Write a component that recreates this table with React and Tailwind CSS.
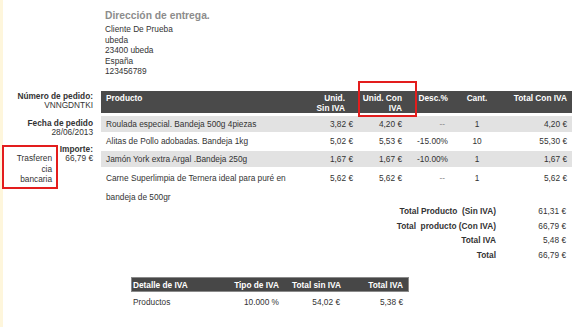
import React from "react";

const rows = [
  { name: "Roulada especial. Bandeja 500g 4piezas", sin: "3,82 €", con: "4,20 €", desc: "--", cant: "1", total: "4,20 €" },
  { name: "Alitas de Pollo adobadas. Bandeja 1kg", sin: "5,02 €", con: "5,53 €", desc: "-15.00%", cant: "10", total: "55,30 €" },
  { name: "Jamón York extra Argal .Bandeja 250g", sin: "1,67 €", con: "1,67 €", desc: "-10.00%", cant: "1", total: "1,67 €" },
];

const totals = [
  ["Total Producto  (Sin IVA)", "61,31 €"],
  ["Total  producto (Con IVA)", "66,79 €"],
  ["Total IVA", "5,48 €"],
  ["Total", "66,79 €"],
];

const Row = ({ r, gray }) => (
  <div className={`flex h-[16px] items-center ${gray ? "bg-[#e2e2e2]" : "bg-white"}`}>
    <div className="w-[199px] pl-[5px] whitespace-pre">{r.name}</div>
    <div className="w-[56px] pr-[3px] text-right">{r.sin}</div>
    <div className="w-[48px] pr-[2px] text-right">{r.con}</div>
    <div className={`w-[46px] pr-[2px] text-right ${r.desc === "--" ? "pr-[5px] text-[#8a8a8a]" : ""}`}>{r.desc}</div>
    <div className="w-[54px] text-center">{r.cant}</div>
    <div className="w-[68px] pr-[5px] text-right">{r.total}</div>
  </div>
);

export default function App() {
  return (
    <div
      className="relative w-[588px] h-[327px] overflow-hidden bg-white text-[#333] text-[8.3px] shadow-[inset_3px_0_0_#fef6dc]"
      style={{ fontFamily: '"Liberation Sans", Arial, sans-serif' }}
    >
      {/* dirección */}
      <div className="pl-[105px] pt-[10px]">
        <div className="text-[10.3px] leading-[12px] font-bold text-[#8c8c8c]">Dirección de entrega.</div>
        <div className="mt-[2px] leading-[10.6px]">
          <div>Cliente De Prueba</div>
          <div>ubeda</div>
          <div>23400 ubeda</div>
          <div>España</div>
          <div>123456789</div>
        </div>
      </div>

      <div className="flex mt-[14.5px]">
        {/* columna izquierda */}
        <div className="w-[95px] pr-[2px] leading-[9px] text-right">
          <div className="pt-[0.5px]">
            <div className="font-bold">Número de pedido:</div>
            <div>VNNGDNTKI</div>
          </div>
          <div className="mt-[9px]">
            <div className="font-bold">Fecha de pedido</div>
            <div>28/06/2013</div>
          </div>
          <div className="mt-[8.5px] flex items-start">
            <div className="ml-[2px] w-[56px] h-[44px] border-2 border-[#e31d1d] pr-[4px] pt-[6px] leading-[10.5px]">
              <div>Trasferen</div>
              <div>cia</div>
              <div>bancaria</div>
            </div>
            <div className="flex-1 text-right">
              <div className="font-bold">Importe:</div>
              <div>66,79 €</div>
            </div>
          </div>
        </div>

        {/* tabla */}
        <div className="ml-[6px] w-[471px]">
          <div className="flex h-[22px] bg-[#4a4a4a] text-white font-bold leading-[10px] pt-[2px]">
            <div className="w-[199px] pl-[5px]">Producto</div>
            <div className="w-[56px] pr-[11px] text-right">Unid.<br />Sin IVA</div>
            <div className="w-[48px] pr-[2px] text-right">Unid. Con<br />IVA</div>
            <div className="w-[46px] pr-[2px] text-right">Desc.%</div>
            <div className="w-[54px] text-center">Cant.</div>
            <div className="w-[68px] pr-[5px] text-right">Total Con IVA</div>
          </div>
          <div className="mt-[2.5px] flex flex-col gap-[1.7px]">
            {rows.map((r, i) => (
              <Row key={i} r={r} gray={i % 2 === 0} />
            ))}
            <div className="flex leading-[18.5px]">
              <div className="w-[199px] pl-[5px] pr-[8px]">Carne Superlimpia de Ternera ideal para puré en bandeja de 500gr</div>
              <div className="w-[56px] pr-[3px] text-right">5,62 €</div>
              <div className="w-[48px] pr-[2px] text-right">5,62 €</div>
              <div className="w-[46px] pr-[5px] text-right text-[#8a8a8a]">--</div>
              <div className="w-[54px] text-center">1</div>
              <div className="w-[68px] pr-[5px] text-right">5,62 €</div>
            </div>
          </div>

          {/* totales */}
          <div className="mt-[-2px] pr-[6px] leading-[14.7px]">
            {totals.map(([l, v]) => (
              <div key={l} className="flex justify-end">
                <div className="font-bold whitespace-pre text-right">{l}</div>
                <div className="w-[70px] text-right">{v}</div>
              </div>
            ))}
          </div>

          {/* detalle IVA */}
          <div className="ml-[30px] mt-[14.6px] w-[278px]">
            <div className="flex h-[15px] items-center border border-[#8a8a8a] bg-[#474747] text-white font-bold">
              <div className="w-[93px] pl-[1px]">Detalle de IVA</div>
              <div className="w-[56px] pr-[2px] text-right">Tipo de IVA</div>
              <div className="w-[62px] pr-[2px] text-right">Total sin IVA</div>
              <div className="w-[65px] pr-[5px] text-right">Total IVA</div>
            </div>
            <div className="flex pt-[3px] leading-[14px]">
              <div className="w-[94px] pl-[2px]">Productos</div>
              <div className="w-[56px] pr-[2px] text-right">10.000 %</div>
              <div className="w-[62px] pr-[3px] text-right">54,02 €</div>
              <div className="w-[66px] pr-[6px] text-right">5,38 €</div>
            </div>
          </div>
        </div>
      </div>

      {/* marca roja sobre la cabecera */}
      <div className="absolute left-[358px] top-[81px] w-[59px] h-[36px] border-2 border-[#e31d1d]" />
    </div>
  );
}
